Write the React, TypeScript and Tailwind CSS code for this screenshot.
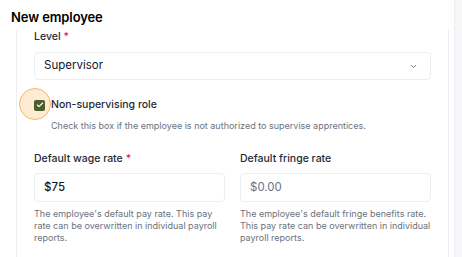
import React from 'react'

function Chevron() {
  return (
    <svg width="9" height="9" viewBox="0 0 24 24" fill="none" stroke="#6b7280" strokeWidth="2.5" strokeLinecap="round" strokeLinejoin="round">
      <path d="m6 9 6 6 6-6" />
    </svg>
  )
}

function Label({ text, required = false }: { text: string; required?: boolean }) {
  return (
    <div className="text-[10.5px] leading-[14px] font-medium text-[#1f2937]">
      {text}
      {required && <span className="text-[#e11d48] ml-[3px]">*</span>}
    </div>
  )
}

export default function App() {
  return (
    <div className="w-[462px] h-[257px] bg-white flex overflow-hidden font-['Inter',sans-serif]">
      <div className="w-[454px] flex flex-col">
        {/* Title */}
        <div className="h-[30px] pl-[11px] pt-[8px] text-[13px] leading-[18px] font-semibold text-black tracking-[-0.1px]">
          New employee
        </div>

        {/* Card */}
        <div className="ml-[16px] w-[433px] flex-1 border-x border-[#eceef1] px-[17px]">
          <Label text="Level" required />
          <div className="mt-[8px] h-[28px] border border-[#eceef1] rounded-[4px] flex items-center justify-between pl-[9px] pr-[12px]">
            <span className="text-[11.5px] text-[#111827]">Supervisor</span>
            <Chevron />
          </div>

          {/* Checkbox */}
          <div className="mt-[17px] h-[16px] flex items-center gap-[6px]">
            <div className="relative w-[11px] h-[11px]">
              <div className="absolute left-[-15px] top-[-12px] w-[32px] h-[32px] rounded-full bg-[#fdebd3] border border-[#f6b86a]" />
              <div className="absolute inset-0 rounded-[2px] bg-[#4b5e2b] flex items-center justify-center">
                <svg width="8" height="8" viewBox="0 0 24 24" fill="none" stroke="white" strokeWidth="3.5" strokeLinecap="round" strokeLinejoin="round">
                  <path d="M20 6 9 17l-5-5" />
                </svg>
              </div>
            </div>
            <span className="text-[10.5px] font-medium text-[#1f2937]">Non-supervising role</span>
          </div>
          <div className="mt-[7px] pl-[17px] text-[9px] leading-[12px] text-[#6b7280]">
            Check this box if the employee is not authorized to supervise apprentices.
          </div>

          {/* Rates */}
          <div className="mt-[20px] grid grid-cols-2 gap-[15px]">
            <div>
              <Label text="Default wage rate" required />
              <div className="mt-[7px] h-[29px] border border-[#eceef1] rounded-[4px] flex items-center pl-[9px] text-[11.5px] font-medium text-[#111827]">
                $75
              </div>
              <p className="mt-[6px] text-[9px] leading-[12px] text-[#6b7280]">
                The employee's default pay rate. This pay rate can be overwritten in individual payroll reports.
              </p>
            </div>
            <div>
              <Label text="Default fringe rate" />
              <div className="mt-[7px] h-[29px] border border-[#eceef1] rounded-[4px] flex items-center pl-[9px] text-[11.5px] text-[#6b7280]">
                $0.00
              </div>
              <p className="mt-[6px] text-[9px] leading-[12px] text-[#6b7280]">
                The employee's default fringe benefits rate. This pay rate can be overwritten in individual payroll reports.
              </p>
            </div>
          </div>
        </div>
      </div>
      <div className="flex-1 bg-[#f5f6f7] border-l border-[#eceef1]" />
    </div>
  )
}
